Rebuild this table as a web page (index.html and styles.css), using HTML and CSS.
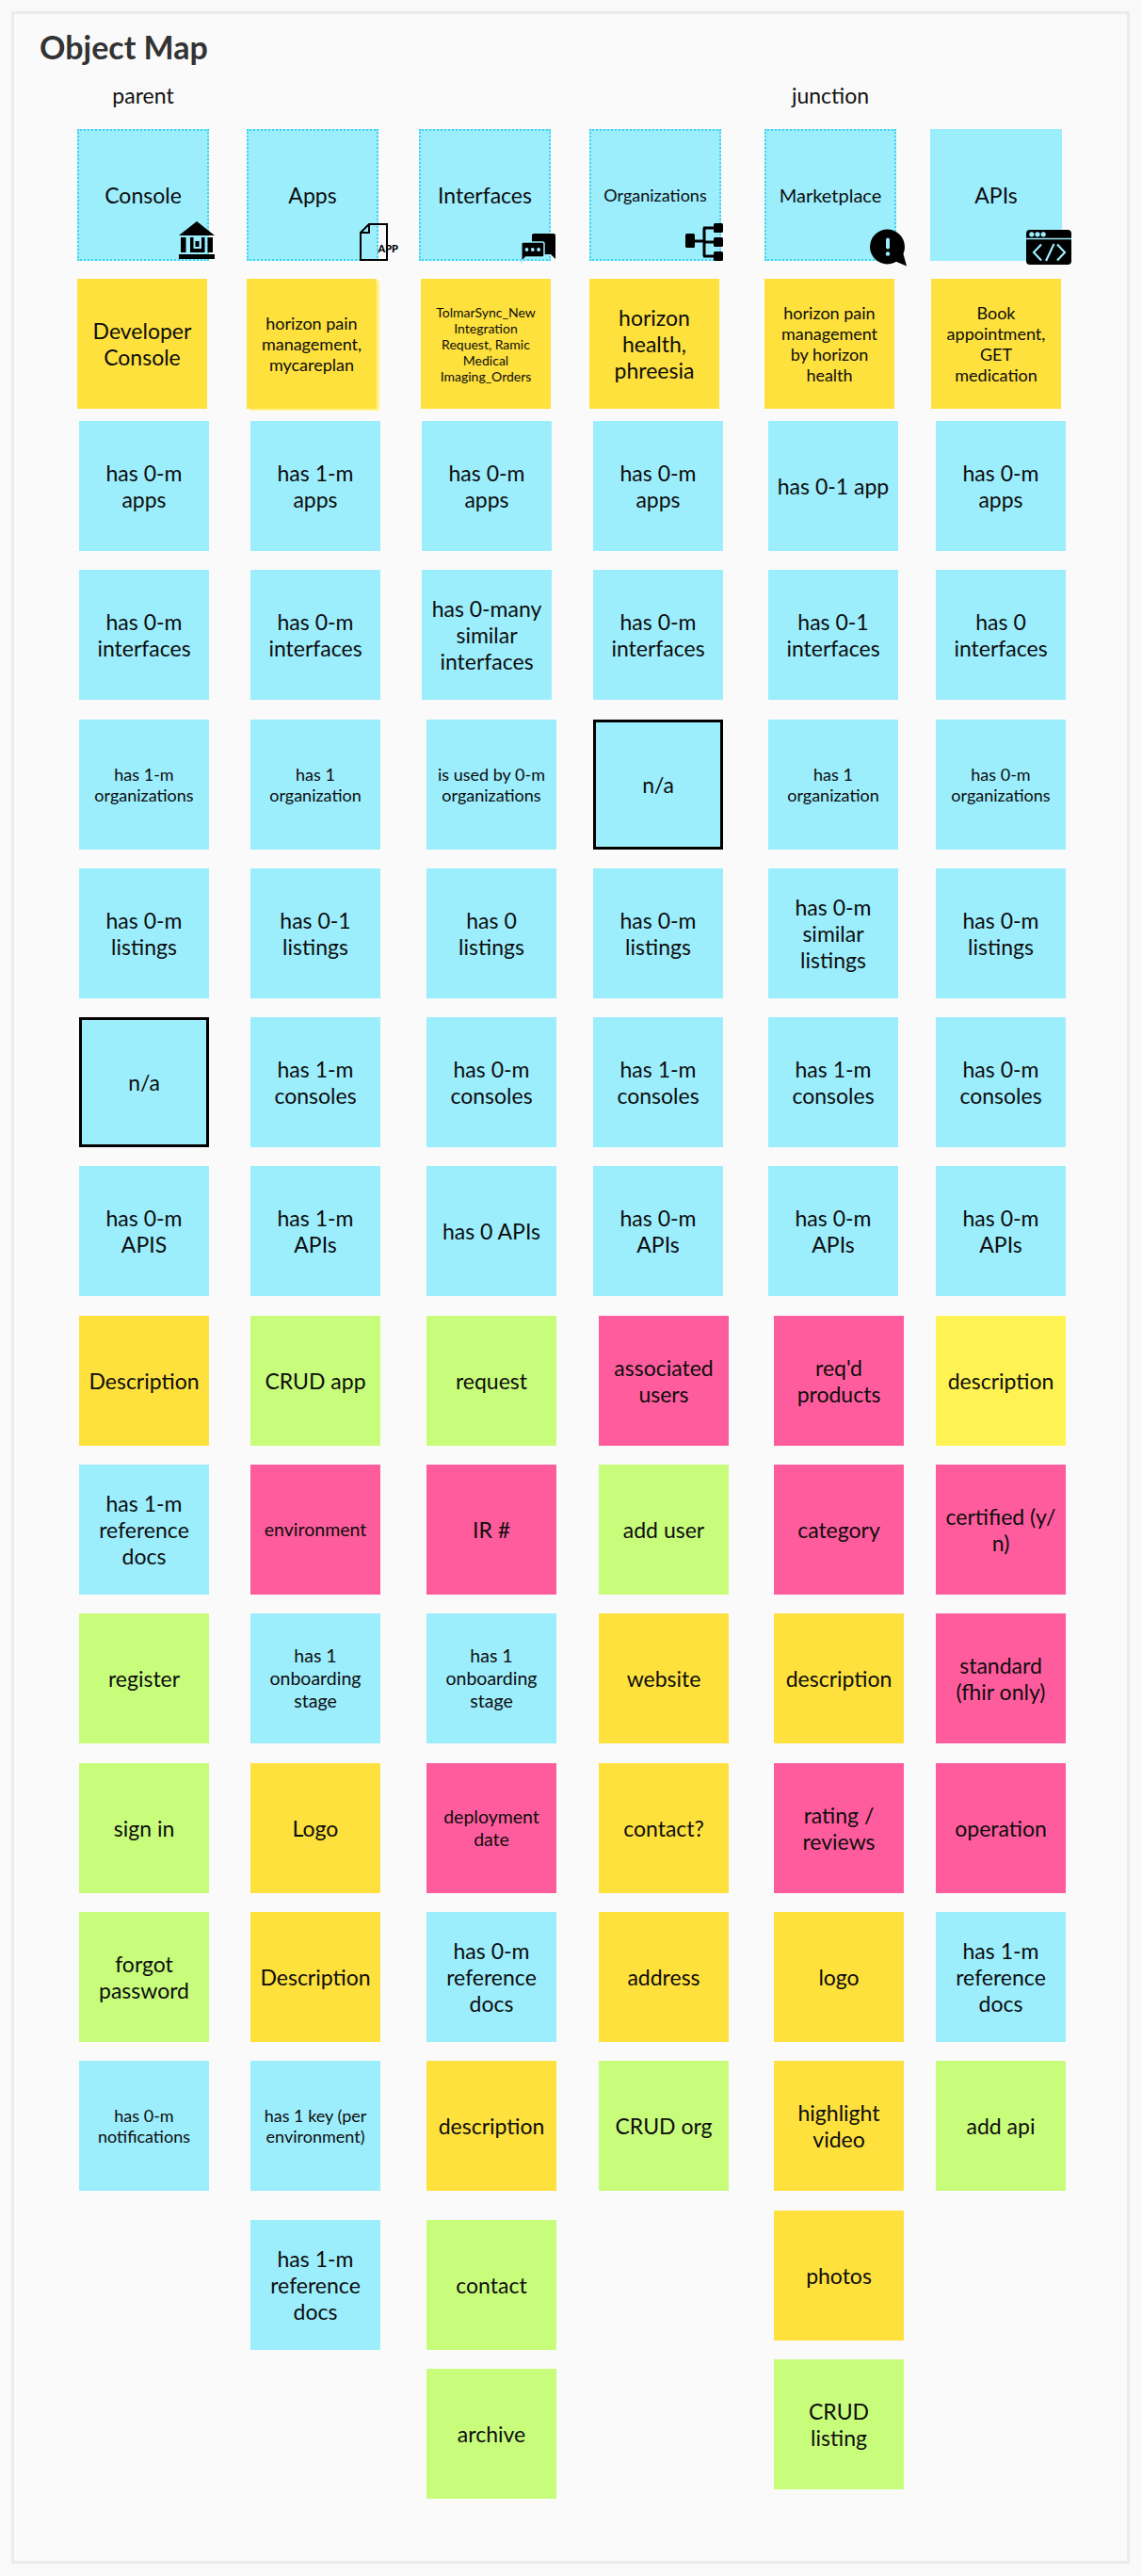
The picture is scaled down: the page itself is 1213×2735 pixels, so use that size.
FILE: index.html
```html
<!DOCTYPE html>
<html lang="en">
<head>
<meta charset="utf-8">
<title>Object Map</title>
<link rel="stylesheet" href="styles.css">
</head>
<body>
<div class="frame">
  <h1 class="title">Object Map</h1>
  <div class="grid labels">
    <span class="label">parent</span>
    <span class="label junction">junction</span>
  </div>
  <div class="grid board">
    <!-- Console -->
    <div class="col">
      <div class="note head blue dotted">Console
        <svg class="icon ic-bank" viewBox="0 0 38 41" width="38" height="41"><polygon points="0,15 19,0 38,15"/><rect x="2" y="17" width="5.5" height="16"/><path d="M12 17h3.5v12h8.5v-12h3.5v16h-15.5z"/><rect x="17.5" y="21" width="4" height="6"/><rect x="30.5" y="17" width="5.5" height="16"/><rect x="0" y="35" width="38" height="5"/></svg>
      </div>
      <div class="note name yellow">Developer<br>Console</div>
      <div class="note blue o2">has 0-m<br>apps</div>
      <div class="note blue o2">has 0-m<br>interfaces</div>
      <div class="note blue o2 s">has 1-m<br>organizations</div>
      <div class="note blue o2">has 0-m<br>listings</div>
      <div class="note blue o2 na">n/a</div>
      <div class="note blue o2">has 0-m<br>APIS</div>
      <div class="note yellow o2">Description</div>
      <div class="note blue o2">has 1-m<br>reference<br>docs</div>
      <div class="note green o2">register</div>
      <div class="note green o2">sign in</div>
      <div class="note green o2">forgot<br>password</div>
      <div class="note blue o2 s">has 0-m<br>notifications</div>
    </div>
    <!-- Apps -->
    <div class="col">
      <div class="note head blue dotted">Apps
        <svg class="icon ic-app" viewBox="0 0 42 40" width="42" height="40"><path d="M10 1H29V39H1V10Z" fill="none" stroke="#000" stroke-width="2"/><path d="M1.5 10H10V1.5" fill="none" stroke="#000" stroke-width="2"/><text x="19.5" y="31" class="app-txt">APP</text></svg>
      </div>
      <div class="note name yellow s glow">horizon pain<br>management,<br>mycareplan</div>
      <div class="note blue o4">has 1-m<br>apps</div>
      <div class="note blue o4">has 0-m<br>interfaces</div>
      <div class="note blue o4 s">has 1<br>organization</div>
      <div class="note blue o4">has 0-1<br>listings</div>
      <div class="note blue o4">has 1-m<br>consoles</div>
      <div class="note blue o4">has 1-m<br>APIs</div>
      <div class="note green o4">CRUD app</div>
      <div class="note pink o4 m">environment</div>
      <div class="note blue o4 m">has 1<br>onboarding<br>stage</div>
      <div class="note yellow o4">Logo</div>
      <div class="note yellow o4">Description</div>
      <div class="note blue o4 s">has 1 key (per<br>environment)</div>
      <div class="note blue o4 drop">has 1-m<br>reference<br>docs</div>
    </div>
    <!-- Interfaces -->
    <div class="col">
      <div class="note head blue dotted">Interfaces
        <svg class="icon ic-chat" viewBox="0 0 38 31" width="38" height="31"><path d="M14 0H35Q37 0 37 2V27L32 22H14Q12 22 12 20V2Q12 0 14 0Z"/><path d="M0.8 11Q0.8 9 2.8 9H23Q25 9 25 11V23Q25 25 23 25H5.5L0.8 30Z" stroke="#9ceefd" stroke-width="1.5"/><circle cx="6.5" cy="17" r="1.9" fill="#9ceefd"/><circle cx="12.8" cy="17" r="1.9" fill="#9ceefd"/><circle cx="19.1" cy="17" r="1.9" fill="#9ceefd"/></svg>
      </div>
      <div class="note name yellow xs o2">TolmarSync_New<br>Integration<br>Request, Ramic<br>Medical<br>Imaging_Orders</div>
      <div class="note blue o3">has 0-m<br>apps</div>
      <div class="note blue o3">has 0-many<br>similar<br>interfaces</div>
      <div class="note blue o8 s">is used by 0-m<br>organizations</div>
      <div class="note blue o8">has 0<br>listings</div>
      <div class="note blue o8">has 0-m<br>consoles</div>
      <div class="note blue o8">has 0 APIs</div>
      <div class="note green o8">request</div>
      <div class="note pink o8">IR #</div>
      <div class="note blue o8 m">has 1<br>onboarding<br>stage</div>
      <div class="note pink o8 m">deployment<br>date</div>
      <div class="note blue o8">has 0-m<br>reference<br>docs</div>
      <div class="note yellow o8">description</div>
      <div class="note green o8 drop">contact</div>
      <div class="note green o8">archive</div>
    </div>
    <!-- Organizations -->
    <div class="col">
      <div class="note head blue dotted s">Organizations
        <svg class="icon ic-org" viewBox="0 0 40 40" width="40" height="40"><rect x="0" y="11" width="10" height="15" rx="1.5"/><rect x="30" y="0" width="10" height="10" rx="1.5"/><rect x="30" y="15" width="10" height="10" rx="1.5"/><rect x="30" y="30" width="10" height="10" rx="1.5"/><path d="M9 19H20M20 5V35M19 5H31M19 20H31M19 35H31" stroke="#000" stroke-width="3" fill="none"/></svg>
      </div>
      <div class="note name yellow">horizon<br>health,<br>phreesia</div>
      <div class="note blue o4">has 0-m<br>apps</div>
      <div class="note blue o4">has 0-m<br>interfaces</div>
      <div class="note blue o4 na">n/a</div>
      <div class="note blue o4">has 0-m<br>listings</div>
      <div class="note blue o4">has 1-m<br>consoles</div>
      <div class="note blue o4">has 0-m<br>APIs</div>
      <div class="note pink o10">associated<br>users</div>
      <div class="note green o10">add user</div>
      <div class="note yellow o10">website</div>
      <div class="note yellow o10">contact?</div>
      <div class="note yellow o10">address</div>
      <div class="note green o10">CRUD org</div>
    </div>
    <!-- Marketplace -->
    <div class="col">
      <div class="note head blue dotted mk">Marketplace
        <svg class="icon ic-alert" viewBox="0 0 42 40" width="42" height="40"><circle cx="19.5" cy="19" r="18.5"/><path d="M27 34L40 39.5L36 25Z"/><rect x="18" y="9.5" width="4" height="12" rx="2" fill="#9ceefd"/><circle cx="20" cy="26.5" r="2.2" fill="#9ceefd"/></svg>
      </div>
      <div class="note name yellow s">horizon pain<br>management<br>by horizon<br>health</div>
      <div class="note blue o4">has 0-1 app</div>
      <div class="note blue o4">has 0-1<br>interfaces</div>
      <div class="note blue o4 s">has 1<br>organization</div>
      <div class="note blue o4">has 0-m<br>similar<br>listings</div>
      <div class="note blue o4">has 1-m<br>consoles</div>
      <div class="note blue o4">has 0-m<br>APIs</div>
      <div class="note pink o10">req'd<br>products</div>
      <div class="note pink o10">category</div>
      <div class="note yellow o10">description</div>
      <div class="note pink o10">rating /<br>reviews</div>
      <div class="note yellow o10">logo</div>
      <div class="note yellow o10">highlight<br>video</div>
      <div class="note yellow o10">photos</div>
      <div class="note green o10">CRUD<br>listing</div>
    </div>
    <!-- APIs -->
    <div class="col">
      <div class="note head blue">APIs
        <svg class="icon ic-code" viewBox="0 0 48 37" width="48" height="37"><rect width="48" height="37" rx="4"/><path d="M0 9.5H48" stroke="#9ceefd" stroke-width="1.5"/><circle cx="5.8" cy="4.8" r="2.6" fill="#9ceefd"/><circle cx="12" cy="4.8" r="2.6" fill="#9ceefd"/><circle cx="18.2" cy="4.8" r="2.6" fill="#9ceefd"/><path d="M16 15.5L8 24L16 32.5M33 15.5L41 24L33 32.5M29.5 15L21 33" stroke="#9ceefd" stroke-width="2.2" fill="none"/></svg>
      </div>
      <div class="note name yellow s o1">Book<br>appointment,<br>GET<br>medication</div>
      <div class="note blue o6">has 0-m<br>apps</div>
      <div class="note blue o6">has 0<br>interfaces</div>
      <div class="note blue o6 s">has 0-m<br>organizations</div>
      <div class="note blue o6">has 0-m<br>listings</div>
      <div class="note blue o6">has 0-m<br>consoles</div>
      <div class="note blue o6">has 0-m<br>APIs</div>
      <div class="note lemon o6">description</div>
      <div class="note pink o6">certified (y/<br>n)</div>
      <div class="note pink o6">standard<br>(fhir only)</div>
      <div class="note pink o6">operation</div>
      <div class="note blue o6">has 1-m<br>reference<br>docs</div>
      <div class="note green o6">add api</div>
    </div>
  </div>
</div>
</body>
</html>
```

FILE: styles.css
```css
html, body {
  margin: 0;
  padding: 0;
}

body {
  background: #f9f9f9;
  font-family: "Lato", "Open Sans", sans-serif;
  color: #0d0d0d;
}

.frame {
  margin: 12px;
  width: 1188px;
  height: 2710px;
  box-sizing: border-box;
  border: 3px solid #ebebeb;
  background: #fafafa;
}

.title {
  margin: 15px 0 0 27px;
  font-size: 34px;
  line-height: 40px;
  font-weight: 700;
  color: #333333;
}

.grid {
  display: grid;
  grid-template-columns: 180px 183px 181px 186px 176px 150px;
  padding-left: 67px;
}

.labels {
  margin-top: 17px;
  height: 28px;
}

.label {
  width: 140px;
  text-align: center;
  font-size: 23px;
  line-height: 28px;
  color: #111111;
}

.label.junction {
  grid-column: 5;
}

.board {
  margin-top: 22px;
  align-items: start;
}

.col {
  display: flex;
  flex-direction: column;
  align-items: flex-start;
}

.note {
  position: relative;
  width: 138px;
  height: 138px;
  box-sizing: border-box;
  display: flex;
  align-items: center;
  justify-content: center;
  text-align: center;
  white-space: nowrap;
  font-size: 23px;
  line-height: 28px;
  margin-bottom: 20.3px;
}

.note.head {
  width: 140px;
  height: 140px;
  margin-bottom: 19px;
}

.note.name {
  margin-bottom: 13px;
}

.dotted {
  border: 2px dotted #3fd3ee;
}

.na {
  border: 3px solid #000000;
}

.glow {
  box-shadow: 3px 2px 0 #fff38c;
}

/* colours */
.blue { background: #9ceefd; }
.yellow { background: #ffe13d; }
.lemon { background: #fff353; }
.pink { background: #ff5c9d; }
.green { background: #c8fd7c; }

/* text sizes */
.s { font-size: 18px; line-height: 22px; }
.m { font-size: 19.5px; line-height: 24px; }
.xs { font-size: 14px; line-height: 17px; }
.mk { font-size: 20px; line-height: 24px; }

/* small hand-placed offsets of the sticky notes */
.o1 { margin-left: 1px; }
.o2 { margin-left: 2px; }
.o3 { margin-left: 3px; }
.o4 { margin-left: 4px; }
.o6 { margin-left: 6px; }
.o8 { margin-left: 8px; }
.o10 { margin-left: 10px; }
.drop { margin-top: 10px; }

/* icons overlapping the header notes */
.icon {
  position: absolute;
  fill: #000000;
}

.ic-bank { left: 106px; top: 96px; }
.ic-app { left: 118px; top: 98px; overflow: visible; }
.ic-chat { left: 106px; top: 109px; overflow: visible; }
.ic-org { left: 100px; top: 98px; }
.ic-alert { left: 109px; top: 104px; }
.ic-code { left: 102px; top: 107px; }

.app-txt {
  font-family: "Lato", sans-serif;
  font-weight: 900;
  font-size: 11px;
  fill: #000000;
}
```
